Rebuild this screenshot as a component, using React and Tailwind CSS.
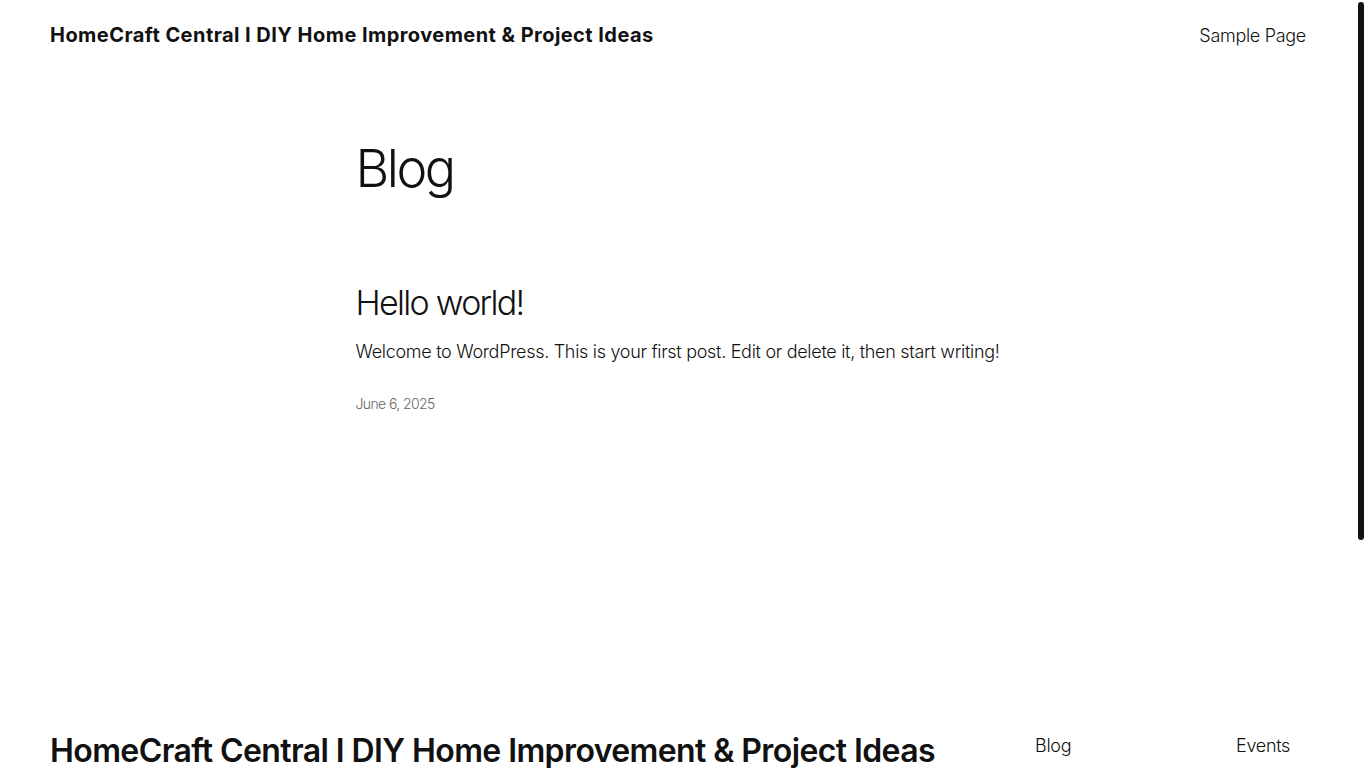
import React from 'react'

const font = { fontFamily: 'Inter, "Noto Sans", sans-serif' }

const footerLinks = [
    ['Blog', 'About', 'FAQs', 'Authors'],
    ['Events', 'Shop', 'Patterns', 'Themes'],
]

const App = () => {
    return (
        <div style={font} className="flex h-screen bg-white text-[#111111]">
            <div className="flex-1 overflow-y-auto [scrollbar-width:none]">
                <header className="flex items-center justify-between px-[50px] h-[70px]">
                    <a href="#" className="text-[20px] font-bold tracking-[0.45px]">
                        HomeCraft Central I DIY Home Improvement &amp; Project Ideas
                    </a>
                    <nav>
                        <a href="#" className="text-[18px] font-light tracking-[-0.3px]">Sample Page</a>
                    </nav>
                </header>

                <main className="w-[645px] mx-auto pt-[68px] pb-[288px]">
                    <h1 className="text-[52px] leading-[1.2] font-light tracking-[-2.5px]">Blog</h1>

                    <article className="mt-[83px]">
                        <h2 className="text-[34px] leading-[1.2] font-light tracking-[-1.7px]">
                            <a href="#">Hello world!</a>
                        </h2>
                        <p className="mt-[15px] text-[18px] leading-[1.4] font-light tracking-[-0.3px]">
                            Welcome to WordPress. This is your first post. Edit or delete it, then start writing!
                        </p>
                        <p className="mt-[29px] text-[14px] font-light text-[#666666] tracking-[-0.6px]">June 6, 2025</p>
                    </article>
                </main>

                <footer className="px-[50px] pt-[30px] pb-[60px]">
                    <div className="flex justify-between items-start">
                        <a href="#" className="text-[32px] leading-[1.2] font-semibold tracking-[-0.6px]">
                            HomeCraft Central I DIY Home Improvement &amp; Project Ideas
                        </a>
                        <div className="flex">
                            {footerLinks.map((col, i) => (
                                <ul key={i} className={`flex flex-col gap-[14px] ${i === 0 ? 'w-[201px]' : 'w-[70px]'}`}>
                                    {col.map((l) => (
                                        <li key={l} className="text-[18px] font-light tracking-[-0.3px]">
                                            <a href="#">{l}</a>
                                        </li>
                                    ))}
                                </ul>
                            ))}
                        </div>
                    </div>
                    <div className="flex justify-between mt-[80px] text-[14px] font-light">
                        <span>Twenty Twenty-Five</span>
                        <span>Designed with <a href="#" className="underline">WordPress</a></span>
                    </div>
                </footer>
            </div>

            {/* scrollbar rail */}
            <div className="w-[10px] shrink-0 pt-[2px]">
                <div className="ml-[2px] w-[6px] h-[538px] rounded-full bg-[#111111]"></div>
            </div>
        </div>
    )
}

export default App
